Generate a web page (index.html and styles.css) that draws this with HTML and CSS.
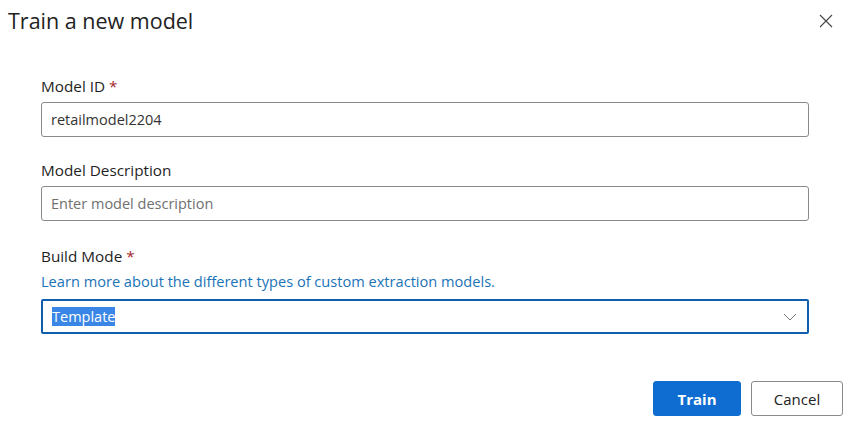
FILE: index.html
```html
<!DOCTYPE html>
<html lang="en">
<head>
    <meta charset="UTF-8">
    <meta name="viewport" content="width=device-width, initial-scale=1.0">
    <title>Train a new model</title>
    <link rel="stylesheet" href="styles.css">
</head>
<body>
    <div class="dialog">
        <div class="dialog-header">
            <h2>Train a new model</h2>
            <button class="close-btn" aria-label="Close">
                <svg width="14" height="14" viewBox="0 0 14 14">
                    <path d="M1 1 L13 13 M13 1 L1 13" stroke="#444" stroke-width="1.1" fill="none"/>
                </svg>
            </button>
        </div>

        <form class="dialog-body">
            <div class="field">
                <label for="modelId">Model ID <span class="req">*</span></label>
                <input type="text" id="modelId" value="retailmodel2204">
            </div>
            <div class="field">
                <label for="modelDesc">Model Description</label>
                <input type="text" id="modelDesc" placeholder="Enter model description">
            </div>
            <div class="field build-mode">
                <label>Build Mode <span class="req">*</span></label>
                <a href="#" class="help-link">Learn more about the different types of custom extraction models.</a>
                <div class="dropdown">
                    <span class="selected">Template</span>
                    <svg width="14" height="8" viewBox="0 0 14 8">
                        <path d="M1 1 L7 7 L13 1" stroke="#777" stroke-width="1" fill="none"/>
                    </svg>
                </div>
            </div>
        </form>

        <div class="dialog-footer">
            <button class="btn primary">Train</button>
            <button class="btn cancel">Cancel</button>
        </div>
    </div>
</body>
</html>
```

FILE: styles.css
```css
body {
    margin: 0;
    padding: 0;
    background-color: white;
    font-family: "Open Sans", "Noto Sans", Arial, sans-serif;
    color: #1f1f1f;
}
.dialog {
    width: 850px;
    height: 429px;
    display: flex;
    flex-direction: column;
}
.dialog-header {
    display: flex;
    justify-content: space-between;
    align-items: center;
    padding: 5px 17px 0 8px;
    height: 30px;
}
h2 {
    margin: 0;
    font-size: 21.5px;
    font-weight: 400;
    color: #222;
}
.close-btn {
    background: none;
    border: none;
    padding: 0;
    width: 14px;
    height: 14px;
    margin-top: 2px;
    cursor: pointer;
}
.dialog-body {
    padding: 41px 41px 0 41px;
    display: flex;
    flex-direction: column;
    gap: 23px;
}
.field {
    display: flex;
    flex-direction: column;
}
.build-mode {
    margin-top: 2px;
}
label {
    font-size: 15.3px;
    line-height: 20px;
    color: #1f1f1f;
    margin-bottom: 6px;
}
.req {
    color: #a4262c;
}
input[type="text"] {
    height: 35px;
    box-sizing: border-box;
    border: 1px solid #8a8a8a;
    border-radius: 3px;
    padding: 0 9px;
    font-family: inherit;
    font-size: 14.5px;
    color: #333;
}
input::placeholder {
    color: #707070;
}
.help-link {
    color: #1a73b8;
    text-decoration: none;
    font-size: 14.6px;
    line-height: 20px;
    margin-top: -1px;
    margin-bottom: 8px;
}
.dropdown {
    height: 35px;
    box-sizing: border-box;
    border: 2px solid #0f5fae;
    border-radius: 2px;
    display: flex;
    align-items: center;
    justify-content: space-between;
    padding: 0 10px 0 9px;
    font-size: 14.5px;
}
.selected {
    background-color: #3a86e6;
    color: white;
    line-height: 19px;
}
.dialog-footer {
    margin-top: auto;
    display: flex;
    justify-content: flex-end;
    gap: 10px;
    padding: 0 7px 13px 0;
}
.btn {
    height: 35px;
    min-width: 88px;
    padding: 0 16px;
    border: 1px solid #8a8a8a;
    border-radius: 3px;
    background-color: white;
    font-family: inherit;
    font-size: 15px;
    color: #222;
    cursor: pointer;
}
.btn.cancel {
    min-width: 92px;
}
.btn.primary {
    background-color: #0f6cd0;
    border-color: #0f6cd0;
    color: white;
    font-weight: 700;
}
```
